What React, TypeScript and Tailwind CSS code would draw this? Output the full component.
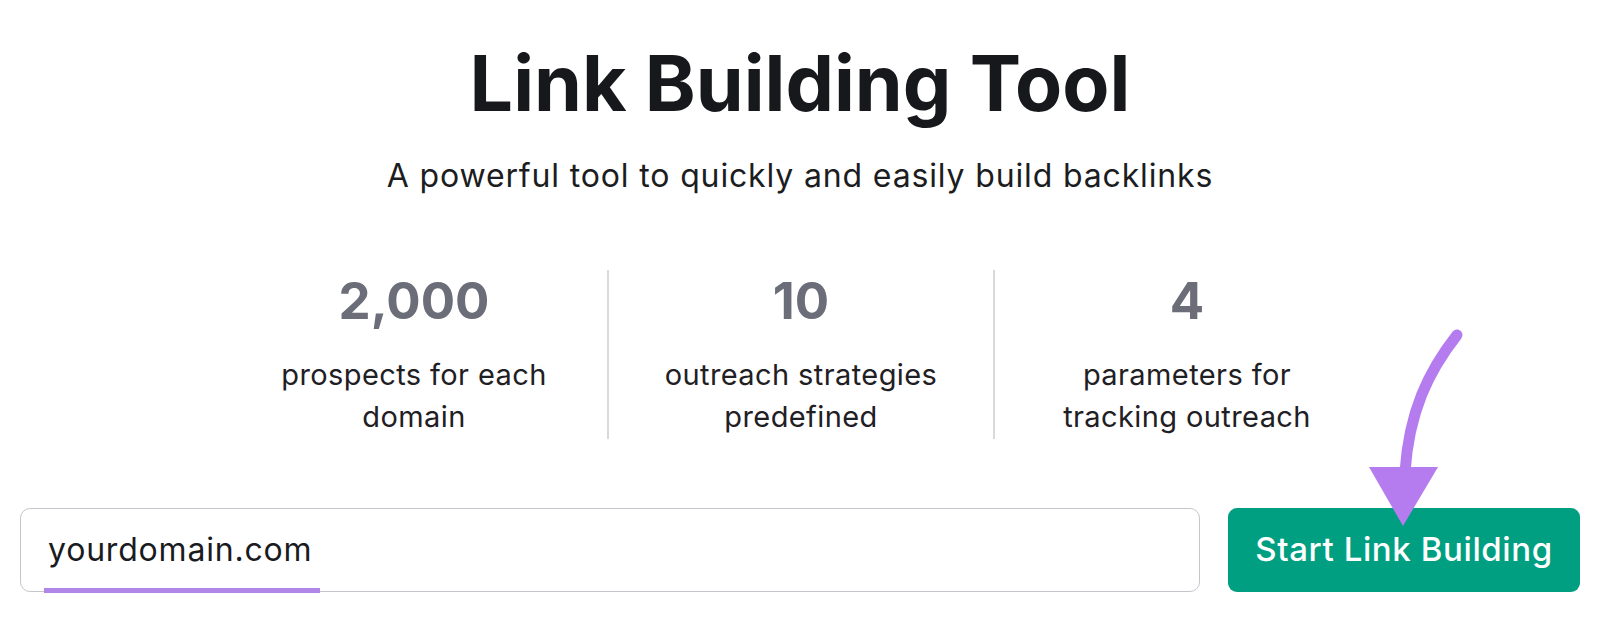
export default function App() {
  const stats = [
    { value: "2,000", lines: ["prospects for each", "domain"] },
    { value: "10", lines: ["outreach strategies", "predefined"] },
    { value: "4", lines: ["parameters for", "tracking outreach"] },
  ];

  return (
    <div className="relative w-[1600px] h-[633px] bg-white font-['Inter',sans-serif] overflow-hidden">
      <h1 className="pt-[45px] text-center text-[77px] leading-none font-bold text-[#17181c]">
        Link Building Tool
      </h1>
      <p className="mt-[34px] text-center text-[32px] leading-[40px] tracking-[0.85px] text-[#1c1d21]">
        A powerful tool to quickly and easily build backlinks
      </p>

      <div className="mt-[74px] mx-auto w-[1158px] grid grid-cols-3">
        {stats.map((s, i) => (
          <div
            key={i}
            className={`h-[169px] flex flex-col items-center pt-[5px] ${i > 0 ? "border-l-2 border-[#d9d9dc]" : ""}`}
          >
            <div className="text-[51px] leading-none font-bold text-[#6b6e79]">{s.value}</div>
            <div className="mt-[28px] text-center text-[29px] leading-[42px] tracking-[0.4px] text-[#1f2024]">
              {s.lines.map((l) => (
                <div key={l}>{l}</div>
              ))}
            </div>
          </div>
        ))}
      </div>

      <div className="mt-[69px] px-[20px] flex gap-[28px]">
        <div className="relative flex-1 h-[84px] rounded-[10px] border-[1.5px] border-[#c5c6cc] flex items-center pl-[27px]">
          <span className="text-[32px] tracking-[0.8px] text-[#1a1b1f]">yourdomain.com</span>
          <div className="absolute left-[23px] bottom-[-2px] w-[276px] h-[5px] bg-[#b285e8]" />
        </div>
        <button className="w-[352px] h-[84px] rounded-[9px] bg-[#009f81] text-white text-[33px] tracking-[0.6px] font-medium">
          Start Link Building
        </button>
      </div>

      <svg className="absolute left-0 top-0 pointer-events-none" width="1600" height="633">
        <path
          d="M1457 335 C 1428 372, 1409 412, 1405 472"
          stroke="#b57cf0"
          strokeWidth="11"
          strokeLinecap="round"
          fill="none"
        />
        <path d="M1369 467 L1438 467 L1403 526 Z" fill="#b57cf0" />
      </svg>
    </div>
  );
}
